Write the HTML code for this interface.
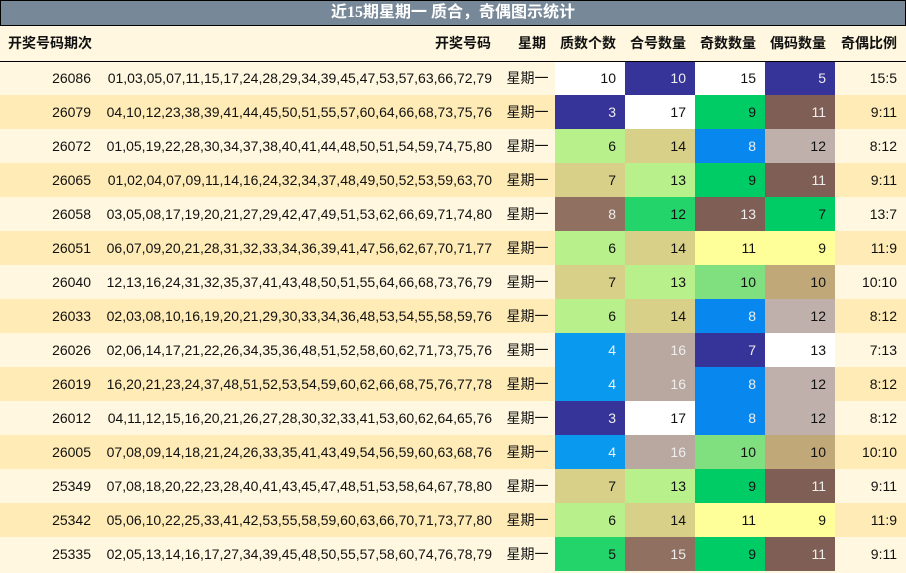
<!DOCTYPE html>
<html><head><meta charset="utf-8"><style>
*{margin:0;padding:0;box-sizing:border-box}
body{width:906px;height:573px;overflow:hidden;background:#fff7df;font-family:"Liberation Sans","Noto Sans CJK SC",sans-serif;font-size:14px;color:#111}
.title{height:26px;background:#778899;border:1px solid #000;color:#fff;font:bold 16px "Liberation Serif","Noto Sans CJK SC",serif;text-align:center;line-height:24px}
table{border-collapse:collapse;table-layout:fixed;width:906px}
td,th{height:34px;padding:0 9px 0 0;text-align:right;white-space:nowrap;overflow:hidden}
th{height:35px;font-weight:bold;border-bottom:1px solid #000;background:#fff7df}
tr.a td{background:#fff7df}tr.b td{background:#ffebb5}
th.l{text-align:left;padding-left:8px}
td.n{text-align:center;padding:0}
td.w{padding-right:8px}
.W{background:#fff!important}.D{background:#363499!important;color:#eee}.G{background:#00cc66!important}.B{background:#7f5f55!important;color:#eee}
.L{background:#b8f08c!important}.K{background:#d8d088!important}.U{background:#0888ee!important;color:#eee}.M{background:#c0b0ab!important}
.R{background:#907060!important;color:#eee}.E{background:#22d46a!important}.Y{background:#ffff99!important}.N{background:#80e080!important}
.T{background:#c0a878!important}.V{background:#0999ee!important;color:#eee}.Q{background:#b8a8a0!important;color:#eee}
</style></head><body>
<div class="title">近15期星期一 质合，奇偶图示统计</div>
<table>
<colgroup><col style="width:100px"><col style="width:400px"><col style="width:55px"><col style="width:70px"><col style="width:70px"><col style="width:70px"><col style="width:70px"><col style="width:71px"></colgroup>
<tr><th class="l">开奖号码期次</th><th>开奖号码</th><th>星期</th><th>质数个数</th><th>合号数量</th><th>奇数数量</th><th>偶码数量</th><th>奇偶比例</th></tr>
<tr class="a"><td>26086</td><td class="w">01,03,05,07,11,15,17,24,28,29,34,39,45,47,53,57,63,66,72,79</td><td class="n">星期一</td><td class="W">10</td><td class="D">10</td><td class="W">15</td><td class="D">5</td><td>15:5</td></tr>
<tr class="b"><td>26079</td><td class="w">04,10,12,23,38,39,41,44,45,50,51,55,57,60,64,66,68,73,75,76</td><td class="n">星期一</td><td class="D">3</td><td class="W">17</td><td class="G">9</td><td class="B">11</td><td>9:11</td></tr>
<tr class="a"><td>26072</td><td class="w">01,05,19,22,28,30,34,37,38,40,41,44,48,50,51,54,59,74,75,80</td><td class="n">星期一</td><td class="L">6</td><td class="K">14</td><td class="U">8</td><td class="M">12</td><td>8:12</td></tr>
<tr class="b"><td>26065</td><td class="w">01,02,04,07,09,11,14,16,24,32,34,37,48,49,50,52,53,59,63,70</td><td class="n">星期一</td><td class="K">7</td><td class="L">13</td><td class="G">9</td><td class="B">11</td><td>9:11</td></tr>
<tr class="a"><td>26058</td><td class="w">03,05,08,17,19,20,21,27,29,42,47,49,51,53,62,66,69,71,74,80</td><td class="n">星期一</td><td class="R">8</td><td class="E">12</td><td class="B">13</td><td class="G">7</td><td>13:7</td></tr>
<tr class="b"><td>26051</td><td class="w">06,07,09,20,21,28,31,32,33,34,36,39,41,47,56,62,67,70,71,77</td><td class="n">星期一</td><td class="L">6</td><td class="K">14</td><td class="Y">11</td><td class="Y">9</td><td>11:9</td></tr>
<tr class="a"><td>26040</td><td class="w">12,13,16,24,31,32,35,37,41,43,48,50,51,55,64,66,68,73,76,79</td><td class="n">星期一</td><td class="K">7</td><td class="L">13</td><td class="N">10</td><td class="T">10</td><td>10:10</td></tr>
<tr class="b"><td>26033</td><td class="w">02,03,08,10,16,19,20,21,29,30,33,34,36,48,53,54,55,58,59,76</td><td class="n">星期一</td><td class="L">6</td><td class="K">14</td><td class="U">8</td><td class="M">12</td><td>8:12</td></tr>
<tr class="a"><td>26026</td><td class="w">02,06,14,17,21,22,26,34,35,36,48,51,52,58,60,62,71,73,75,76</td><td class="n">星期一</td><td class="V">4</td><td class="Q">16</td><td class="D">7</td><td class="W">13</td><td>7:13</td></tr>
<tr class="b"><td>26019</td><td class="w">16,20,21,23,24,37,48,51,52,53,54,59,60,62,66,68,75,76,77,78</td><td class="n">星期一</td><td class="V">4</td><td class="Q">16</td><td class="U">8</td><td class="M">12</td><td>8:12</td></tr>
<tr class="a"><td>26012</td><td class="w">04,11,12,15,16,20,21,26,27,28,30,32,33,41,53,60,62,64,65,76</td><td class="n">星期一</td><td class="D">3</td><td class="W">17</td><td class="U">8</td><td class="M">12</td><td>8:12</td></tr>
<tr class="b"><td>26005</td><td class="w">07,08,09,14,18,21,24,26,33,35,41,43,49,54,56,59,60,63,68,76</td><td class="n">星期一</td><td class="V">4</td><td class="Q">16</td><td class="N">10</td><td class="T">10</td><td>10:10</td></tr>
<tr class="a"><td>25349</td><td class="w">07,08,18,20,22,23,28,40,41,43,45,47,48,51,53,58,64,67,78,80</td><td class="n">星期一</td><td class="K">7</td><td class="L">13</td><td class="G">9</td><td class="B">11</td><td>9:11</td></tr>
<tr class="b"><td>25342</td><td class="w">05,06,10,22,25,33,41,42,53,55,58,59,60,63,66,70,71,73,77,80</td><td class="n">星期一</td><td class="L">6</td><td class="K">14</td><td class="Y">11</td><td class="Y">9</td><td>11:9</td></tr>
<tr class="a"><td>25335</td><td class="w">02,05,13,14,16,17,27,34,39,45,48,50,55,57,58,60,74,76,78,79</td><td class="n">星期一</td><td class="E">5</td><td class="R">15</td><td class="G">9</td><td class="B">11</td><td>9:11</td></tr>
</table>
</body></html>
